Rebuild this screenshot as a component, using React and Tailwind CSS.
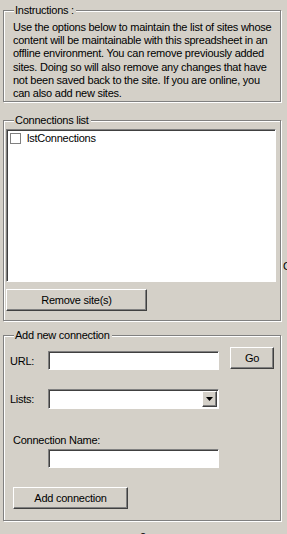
import React from "react";

// classic Windows 3D borders
const raised =
  "border border-t-white border-l-white border-r-[#404040] border-b-[#404040] shadow-[inset_-1px_-1px_0_#808080]";
const sunken =
  "border border-t-[#808080] border-l-[#808080] border-r-white border-b-white shadow-[inset_1px_1px_0_#404040]";

const GroupBox = ({ title, className, children }) => (
  <div
    className={`relative ml-[3px] w-[278px] border border-[#808080] shadow-[inset_1px_1px_0_#fff,1px_1px_0_#fff] ${className}`}
  >
    <span className="absolute left-[10px] top-[-7px] bg-[#d4d0c8] pl-[1px] pr-[2px] leading-[13px]">
      {title}
    </span>
    {children}
  </div>
);

const Button = ({ children, className }) => (
  <button
    className={`flex items-center justify-center bg-[#d4d0c8] text-black leading-none tracking-[-0.25px] ${raised} ${className}`}
  >
    {children}
  </button>
);

const TextBox = ({ className }) => (
  <div className={`bg-white ${sunken} ${className}`} />
);

export default function App() {
  return (
    <div
      className="relative h-[534px] w-[287px] overflow-hidden bg-[#d4d0c8] pt-[10px] text-[11px] tracking-[-0.25px] text-black"
      style={{ fontFamily: '"Liberation Sans", Arial, sans-serif' }}
    >
      {/* Instructions */}
      <GroupBox title="Instructions :" className="h-[92px]">
        <p className="pl-[9px] pr-[2px] pt-[10px] leading-[13.2px]">
          Use the options below to maintain the list of sites whose content
          will be maintainable with this spreadsheet in an offline
          environment. You can remove previously added sites. Doing so will
          also remove any changes that have not been saved back to the site.
          If you are online, you can also add new sites.
        </p>
      </GroupBox>

      {/* Connections list */}
      <GroupBox title="Connections list" className="mt-[18px] h-[201px]">
        <div className={`ml-[2px] mt-[8px] h-[153px] w-[270px] bg-white ${sunken}`}>
          <div className="flex items-center pl-[3px] pt-[2px]">
            <span className="h-[11px] w-[11px] border border-[#808080] bg-white" />
            <span className="ml-[6px] leading-[13px]">lstConnections</span>
          </div>
        </div>
        <Button className="ml-[2px] mt-[7px] h-[22px] w-[141px]">
          Remove site(s)
        </Button>
      </GroupBox>

      {/* Add new connection */}
      <GroupBox title="Add new connection" className="mt-[14px] h-[186px]">
        <div className="pl-[6px]">
          <div className="flex items-start pt-[11px]">
            <span className="mt-[8px] w-[38px] leading-[13px]">URL:</span>
            <TextBox className="mt-[4px] h-[19px] w-[171px]" />
            <Button className="ml-[11px] h-[22px] w-[44px]">Go</Button>
          </div>

          <div className="mt-[19px] flex items-center">
            <span className="w-[38px] leading-[13px]">Lists:</span>
            <div className={`flex h-[20px] w-[171px] justify-end bg-white p-[1px] ${sunken}`}>
              <div className={`flex h-full w-[15px] items-center justify-center bg-[#d4d0c8] ${raised}`}>
                <svg width="7" height="4" viewBox="0 0 7 4">
                  <path d="M0 0h7L3.5 4z" fill="#000" />
                </svg>
              </div>
            </div>
          </div>

          <div className="ml-[3px] mt-[25px] leading-[13px]">Connection Name:</div>
          <TextBox className="ml-[38px] mt-[2px] h-[19px] w-[171px]" />

          <Button className="ml-[3px] mt-[19px] h-[22px] w-[115px]">
            Add connection
          </Button>
        </div>
      </GroupBox>

      {/* clipped fragments of neighbouring content */}
      <span className="absolute left-[283px] top-[260px] leading-[13px]">C</span>
      <span className="absolute left-[140px] top-[529px] leading-[13px]">o</span>
    </div>
  );
}
